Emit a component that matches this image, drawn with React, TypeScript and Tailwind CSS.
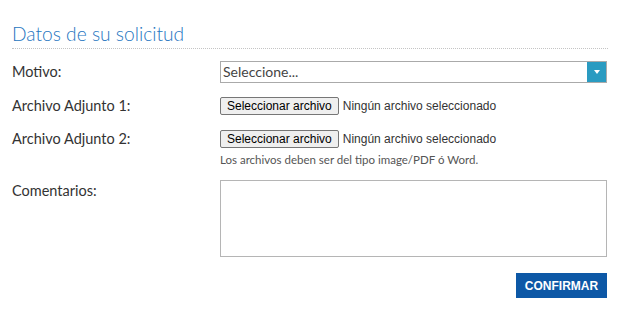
export default function App() {
  const label = "w-[208px] shrink-0 text-[14.5px] text-[#333]"
  const lato = { fontFamily: 'Lato, "Open Sans", sans-serif' }

  const FileField = () => (
    <div className="flex items-center h-[18px]" style={{ fontFamily: '"Liberation Sans", Arial, sans-serif' }}>
      <span className="h-[18px] px-[6px] flex items-center border border-[#767676] rounded-[2px] bg-[#efefef] text-[12px] leading-none text-black">
        Seleccionar archivo
      </span>
      <span className="ml-[4px] text-[12px] text-[#333]">Ningún archivo seleccionado</span>
    </div>
  )

  return (
    <div className="w-[622px] h-[320px] bg-white pl-3 pr-[15px]" style={lato}>
      {/* Title */}
      <div className="pt-[22px] pb-[2px] border-b border-dotted border-[#c4c4c4] mr-[-1px]">
        <h2 className="text-[19.2px] leading-[24px] font-light text-[#2676bf]">Datos de su solicitud</h2>
      </div>

      {/* Motivo */}
      <div className="flex mt-[12px]">
        <div className={`${label} leading-[22px]`}>Motivo:</div>
        <div className="flex-1 flex h-[22px] border border-[#aaa]">
          <div className="flex-1 px-[2px] text-[14px] leading-[20px] text-[#444]">Seleccione...</div>
          <div className="w-[19px] bg-[#2a9bc1] flex items-center justify-center">
            <svg width="6" height="4" viewBox="0 0 6 4"><path d="M0 0H6L3 4Z" fill="#fff" /></svg>
          </div>
        </div>
      </div>

      {/* Adjunto 1 */}
      <div className="flex mt-[14px]">
        <div className={`${label} leading-[17px]`}>Archivo Adjunto 1:</div>
        <FileField />
      </div>

      {/* Adjunto 2 */}
      <div className="flex mt-[15px]">
        <div className={`${label} leading-[17px]`}>Archivo Adjunto 2:</div>
        <div className="flex flex-col">
          <FileField />
          <div className="mt-[5px] text-[11.5px] leading-[14px] text-[#555]">Los archivos deben ser del tipo image/PDF ó Word.</div>
        </div>
      </div>

      {/* Comentarios */}
      <div className="flex mt-[13px]">
        <div className={`${label} pt-[2px] leading-[18px]`}>Comentarios:</div>
        <div className="flex-1 h-[77px] border border-[#b5b5b5]" />
      </div>

      <div className="flex justify-end mt-[16px]">
        <button
          className="w-[91px] h-[25px] bg-[#0d58a6] text-white text-[12px] font-bold"
          style={{ fontFamily: '"Liberation Sans", Arial, sans-serif' }}
        >
          CONFIRMAR
        </button>
      </div>
    </div>
  )
}
